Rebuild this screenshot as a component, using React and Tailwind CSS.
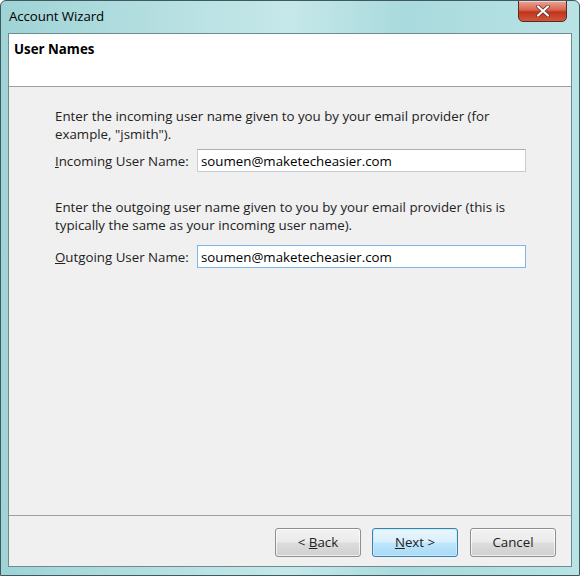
import React from "react";

export default function App() {
  const font = { fontFamily: '"Open Sans", "Noto Sans", sans-serif' };
  return (
    <div className="w-[580px] h-[576px] overflow-hidden rounded-t-[6px] bg-[linear-gradient(90deg,#9fd3d6_0%,#b7e0e2_30%,#c6e8ea_50%,#a9dadd_70%,#b9e3e5_100%)] border border-[#3c5a60] flex flex-col text-[#1e1e1e]" style={font}>
      {/* Title bar */}
      <div className="h-[32px] shrink-0 flex items-start justify-between pl-[8px] pr-[12px]">
        <div className="text-[13.3px] text-black mt-[6px] tracking-[-0.1px]">Account Wizard</div>
        <div className="w-[49px] h-[22px] mt-[-1px] rounded-b-[5px] border border-[#5a2a22] bg-[linear-gradient(180deg,#e9a596_0%,#d9644e_45%,#c0341c_55%,#d0583c_100%)] flex items-center justify-center shadow-[inset_0_1px_0_rgba(255,255,255,0.5)]">
          <svg width="14" height="12" viewBox="0 0 14 12">
            <path d="M2 1.5 L12 10.5 M12 1.5 L2 10.5" stroke="#5a2a22" strokeWidth="3.6" strokeLinecap="round" />
            <path d="M2 1.5 L12 10.5 M12 1.5 L2 10.5" stroke="#ffffff" strokeWidth="2.2" strokeLinecap="round" />
          </svg>
        </div>
      </div>
      {/* Client area */}
      <div className="flex-1 mx-[7px] mb-[8px] border border-[#6c8c90] bg-[#f0f0f0] flex flex-col">
        <div className="h-[53px] shrink-0 bg-white border-b border-[#a0a0a0] px-[5px] pt-[6px]">
          <div className="text-[13.3px] font-bold text-black">User Names</div>
        </div>
        <div className="flex-1 pl-[46px] pr-[45px] pt-[20px] text-[13.3px] leading-[18px] text-[#222]">
          <p>Enter the incoming user name given to you by your email provider (for example, "jsmith").</p>
          <div className="flex items-center mt-[6px] h-[23px]">
            <span className="w-[142px]"><span className="underline">I</span>ncoming User Name:</span>
            <div className="flex-1 h-[23px] bg-white border border-[#c8cdd2] border-t-[#abadb3] px-[3px] flex items-center text-black">soumen@maketecheasier.com</div>
          </div>
          <p className="mt-[26px]">Enter the outgoing user name given to you by your email provider (this is typically the same as your incoming user name).</p>
          <div className="flex items-center mt-[11px] h-[23px]">
            <span className="w-[142px]"><span className="underline">O</span>utgoing User Name:</span>
            <div className="flex-1 h-[23px] bg-white border border-[#7eb4ea] px-[3px] flex items-center text-black">soumen@maketecheasier.com</div>
          </div>
        </div>
        <div className="h-[51px] shrink-0 border-t border-[#a0a0a0] flex items-start justify-end pr-[15px] pt-[12px] text-[13.3px]">
          <button className="w-[86px] h-[29px] rounded-[3px] border border-[#8e8f8f] bg-[linear-gradient(180deg,#f2f2f2_0%,#ebebeb_48%,#dddddd_52%,#cfcfcf_100%)] text-[#222] shadow-[inset_0_0_0_1px_rgba(255,255,255,0.7)]">
            &lt; <span className="underline">B</span>ack
          </button>
          <button className="ml-[11px] w-[86px] h-[29px] rounded-[3px] border border-[#3c7fb1] bg-[linear-gradient(180deg,#eaf6fd_0%,#d9f0fc_48%,#bee6fd_52%,#a7d9f5_100%)] text-[#222] shadow-[inset_0_0_0_1px_#c9ecfb]">
            <span className="underline">N</span>ext &gt;
          </button>
          <button className="ml-[12px] w-[86px] h-[29px] rounded-[3px] border border-[#8e8f8f] bg-[linear-gradient(180deg,#f2f2f2_0%,#ebebeb_48%,#dddddd_52%,#cfcfcf_100%)] text-[#222] shadow-[inset_0_0_0_1px_rgba(255,255,255,0.7)]">
            Cancel
          </button>
        </div>
      </div>
    </div>
  );
}
